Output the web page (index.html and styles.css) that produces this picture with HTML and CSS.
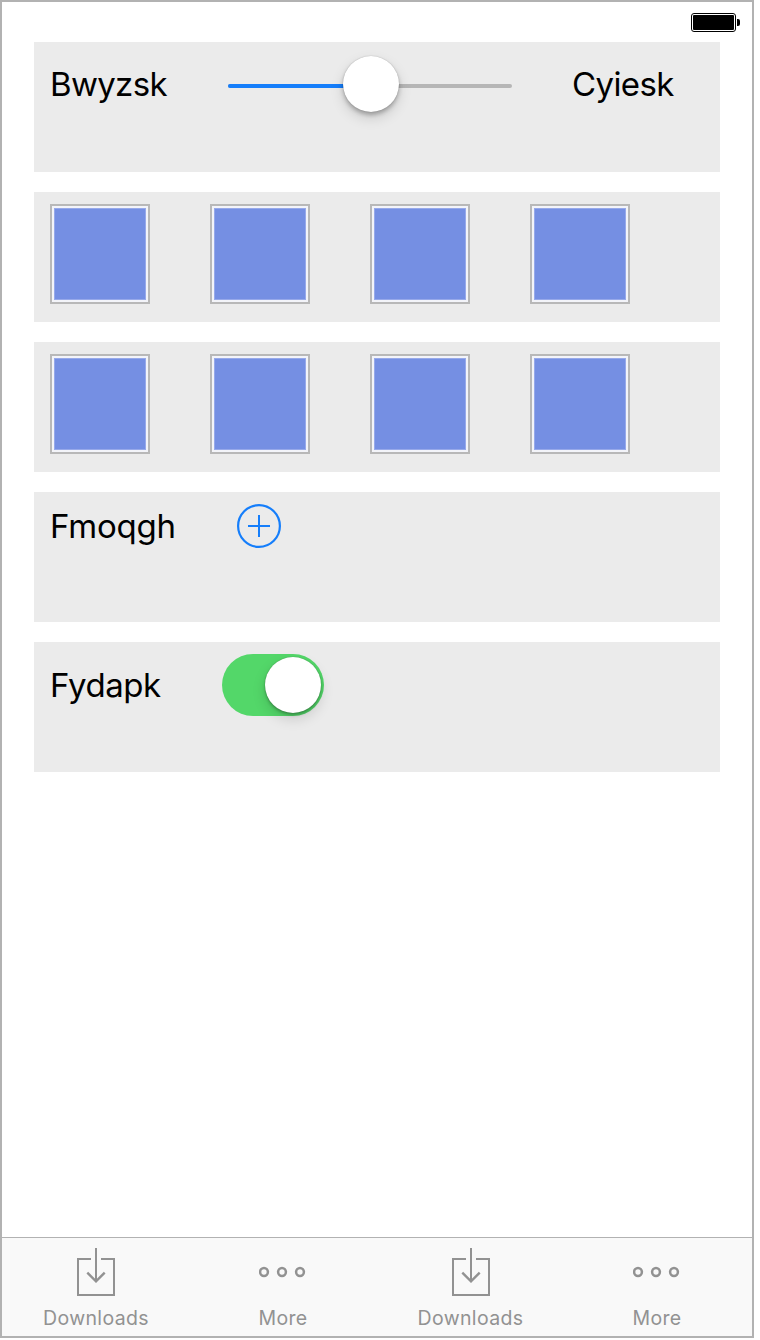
FILE: index.html
```html
<!DOCTYPE html>
<html lang="en">
<head>
<meta charset="utf-8">
<title>Settings</title>
<link rel="stylesheet" href="styles.css">
</head>
<body>
<div class="screen">
  <header class="status">
    <svg class="battery" width="50" height="20" viewBox="0 0 50 20">
      <rect x="0.5" y="0.5" width="44" height="18" rx="2.5" fill="#fff" stroke="#000"/>
      <rect x="2" y="2" width="41" height="15" rx="1" fill="#000"/>
      <path d="M46 6h1a2 2 0 0 1 2 2v3a2 2 0 0 1-2 2h-1z" fill="#000"/>
    </svg>
  </header>
  <main class="panels">
    <section class="panel slider-panel">
      <span class="label label-min">Bwyzsk</span>
      <div class="slider"><div class="fill"></div><div class="thumb slider-thumb"></div></div>
      <span class="label label-max">Cyiesk</span>
    </section>
    <section class="panel swatches">
      <div class="swatch"></div><div class="swatch"></div><div class="swatch"></div><div class="swatch"></div>
    </section>
    <section class="panel swatches">
      <div class="swatch"></div><div class="swatch"></div><div class="swatch"></div><div class="swatch"></div>
    </section>
    <section class="panel add-panel">
      <span class="label label-add">Fmoqgh</span>
      <svg class="plus" width="44" height="44" viewBox="0 0 44 44" fill="none" stroke="#157efb" stroke-width="2">
        <circle cx="22" cy="22" r="20.9" stroke-width="2.2"/>
        <path d="M22 11v22M11 22h22"/>
      </svg>
    </section>
    <section class="panel switch-panel">
      <span class="label label-switch">Fydapk</span>
      <div class="switch"><div class="thumb"></div></div>
    </section>
  </main>
  <nav class="tabs">
    <div class="tab">
      <svg width="38" height="48" viewBox="0 0 38 48" fill="none" stroke="#929292" stroke-width="2"><path d="M14 11H1V47H37V11H24M19 0V34"/><path d="M10.3 24.7l8.7 8.7l8.7-8.7" stroke-width="2.4"/></svg>
      <span class="tab-label download-label">Downloads</span>
    </div>
    <div class="tab">
      <svg width="48" height="48" viewBox="0 0 48 48" fill="none" stroke="#929292" stroke-width="2.5"><circle cx="5" cy="24" r="3.9"/><circle cx="23" cy="24" r="3.9"/><circle cx="41" cy="24" r="3.9"/></svg>
      <span class="tab-label more-label">More</span>
    </div>
    <div class="tab">
      <svg width="38" height="48" viewBox="0 0 38 48" fill="none" stroke="#929292" stroke-width="2"><path d="M14 11H1V47H37V11H24M19 0V34"/><path d="M10.3 24.7l8.7 8.7l8.7-8.7" stroke-width="2.4"/></svg>
      <span class="tab-label download-label">Downloads</span>
    </div>
    <div class="tab">
      <svg width="48" height="48" viewBox="0 0 48 48" fill="none" stroke="#929292" stroke-width="2.5"><circle cx="5" cy="24" r="3.9"/><circle cx="23" cy="24" r="3.9"/><circle cx="41" cy="24" r="3.9"/></svg>
      <span class="tab-label more-label">More</span>
    </div>
  </nav>
</div>
</body>
</html>
```
FILE: styles.css
```css
*, *::before { box-sizing: border-box; }
body { margin: 0; background: #fff; font-family: Inter, "Liberation Sans", sans-serif; }
svg { display: block; flex: none; }
.screen {
  width: 754px;
  height: 1338px;
  border: 2px solid #b2b2b2;
  display: flex;
  flex-direction: column;
}
.status {
  height: 40px;
  padding: 11px 11px 0 0;
  display: flex;
  justify-content: flex-end;
}
.panels {
  flex: 1;
  padding: 0 32px;
  display: flex;
  flex-direction: column;
  gap: 20px;
}
.panel {
  height: 130px;
  padding: 12px 16px;
  background: #ebebeb;
  display: flex;
  align-items: flex-start;
}
.label {
  font-size: 33px;
  line-height: 42px;
  color: #000;
  white-space: nowrap;
  flex: none;
}
.slider-panel .label { margin-top: 9px; }
.label-min { width: 178px; letter-spacing: -0.68px; }
.label-max { margin-left: 60px; letter-spacing: -0.62px; }
.slider {
  position: relative;
  width: 284px;
  height: 4px;
  margin-top: 30px;
  border-radius: 2px;
  background: #b6b6b6;
}
.fill { width: 143px; height: 4px; border-radius: 2px; background: #157efb; }
.thumb {
  width: 56px;
  height: 56px;
  border-radius: 50%;
  background: #fff;
  box-shadow: 0 0 1px rgba(0,0,0,.3), 0 2px 3px rgba(0,0,0,.25), 0 6px 14px rgba(0,0,0,.14);
}
.slider-thumb {
  position: absolute;
  left: 115px;
  top: -28px;
  box-shadow: 0 0 1px rgba(0,0,0,.3), 0 3px 4px rgba(0,0,0,.25), 0 6px 14px rgba(0,0,0,.14);
}
.swatches { gap: 60px; }
.swatch {
  width: 100px;
  height: 100px;
  border: 2px solid #b8b8b8;
  padding: 2px;
  background: #f3f4f9;
}
.swatch::before {
  content: "";
  display: block;
  height: 92px;
  background: #758fe3;
  border: 1px solid #97a9ea;
}
.label-add { width: 187px; margin-top: 1px; letter-spacing: -0.25px; }
.label-switch { width: 172px; margin-top: 10px; letter-spacing: -0.42px; }
.switch {
  width: 102px;
  height: 62px;
  padding: 3px;
  border-radius: 31px;
  background: #53d769;
  display: flex;
  justify-content: flex-end;
}
.tabs {
  height: 99px;
  border-top: 1px solid #b2b2b2;
  background: #f9f9f9;
  display: grid;
  grid-template-columns: 188px 186px 189px 184px;
}
.tab {
  padding-top: 10px;
  display: flex;
  flex-direction: column;
  align-items: center;
}
.tab-label {
  margin-top: 10px;
  font-size: 19.5px;
  line-height: 24px;
  color: #929292;
}
.download-label { letter-spacing: 0.35px; }
.more-label { letter-spacing: 0.3px; }
```
